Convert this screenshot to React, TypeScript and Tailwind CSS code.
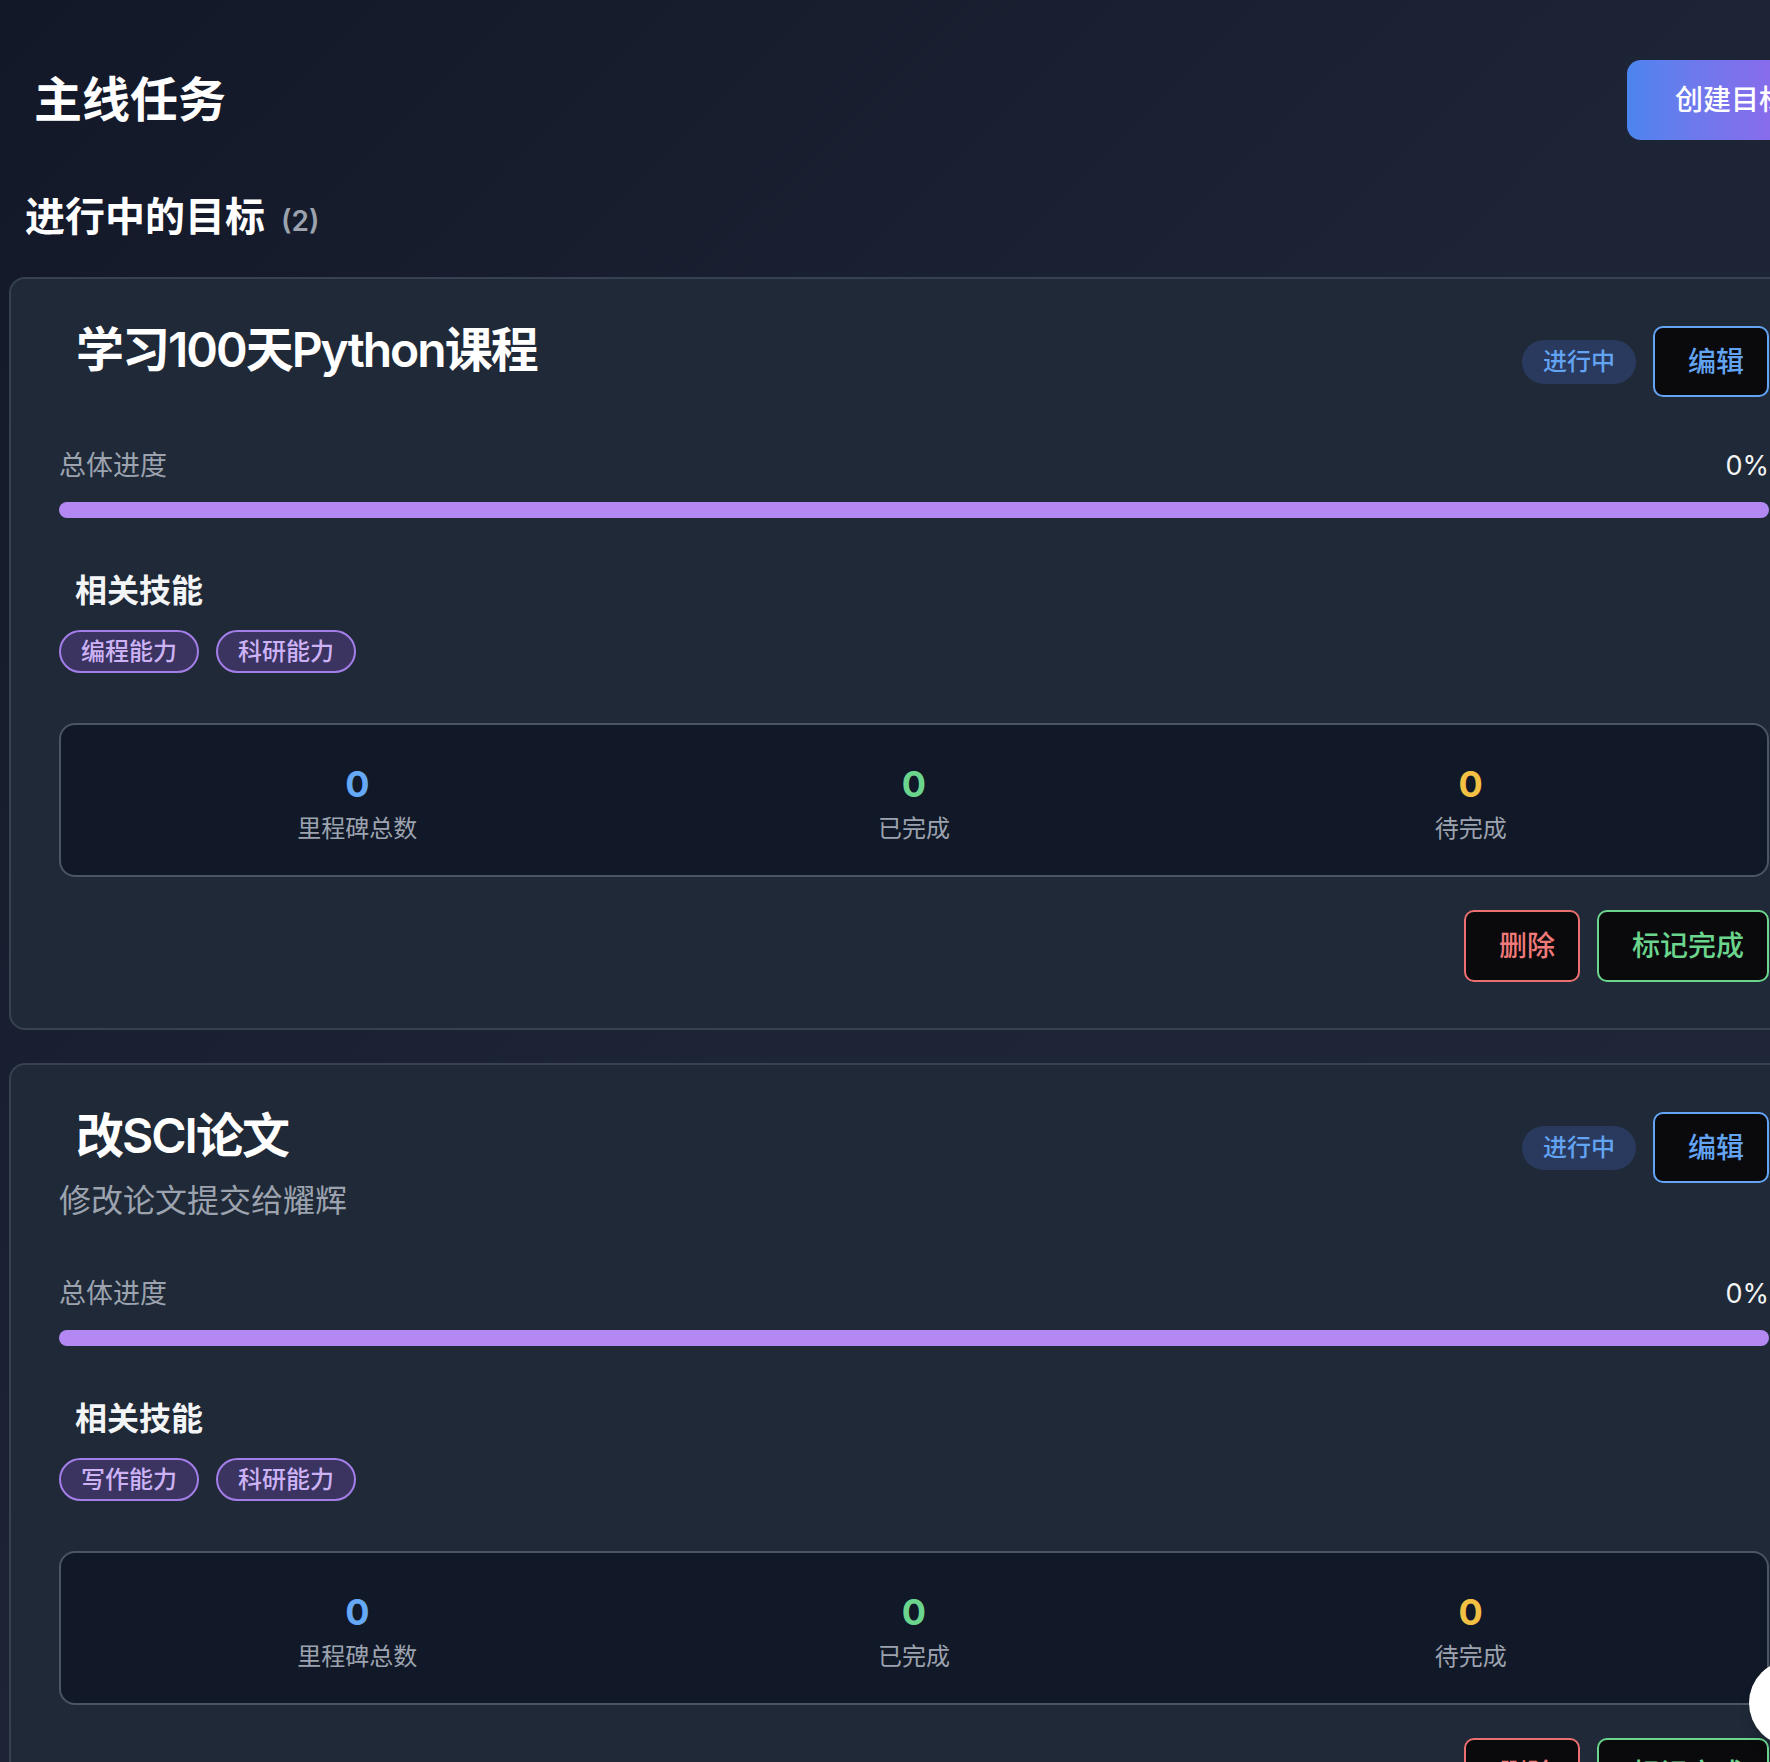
import React from "react";

type Goal = {
  title: string;
  desc?: string;
  skills: string[];
};

const goals: Goal[] = [
  { title: "学习100天Python课程", skills: ["编程能力", "科研能力"] },
  { title: "改SCI论文", desc: "修改论文提交给耀辉", skills: ["写作能力", "科研能力"] },
];

function Stat({ value, label, color }: { value: string; label: string; color: string }) {
  return (
    <div className="flex flex-col items-center">
      <div className={`text-[36px] leading-[40px] font-bold ${color}`}>{value}</div>
      <div className="mt-[9px] text-[24px] leading-[32px] text-[#9ca3af]">{label}</div>
    </div>
  );
}

function GoalCard({ goal }: { goal: Goal }) {
  return (
    <div className="w-[1810px] border-2 border-[#374151] rounded-[16px] bg-[#1f2937] px-[48px] pt-[47px] pb-[46px]">
      <div className="flex justify-between items-start">
        <div className="pl-[17px]">
          <h3 className="text-[48px] leading-[48px] font-semibold tracking-[-2px] text-white">{goal.title}</h3>
          {goal.desc && (
            <p className="-ml-[17px] mt-[17px] text-[32px] leading-[48px] text-[#9ca3af]">{goal.desc}</p>
          )}
        </div>
        <div className="flex items-center gap-[17px]">
          <span className="h-[44px] px-[21px] rounded-full bg-[#2a3a5e] text-[#63a4f2] text-[24px] leading-[44px] font-medium">
            进行中
          </span>
          <button className="h-[71px] pl-[33px] pr-[23px] border-2 border-[#63a4f5] rounded-[10px] bg-[#0a0a0c] text-[#63a4f2] text-[28px] font-medium">
            编辑
          </button>
        </div>
      </div>

      <div className="mt-[49px] flex justify-between items-center h-[40px]">
        <span className="text-[27px] text-[#9ca3af]">总体进度</span>
        <span className="text-[27px] text-[#f3f4f6]">0%</span>
      </div>
      <div className="mt-[16px] h-[16px] rounded-full bg-[#b388f3] overflow-hidden">
        <div className="h-full bg-[#9f6ef0]" style={{ width: "0%" }} />
      </div>

      <h4 className="mt-[51px] pl-[16px] text-[32px] leading-[44px] font-semibold text-[#f3f4f6]">相关技能</h4>
      <div className="mt-[17px] flex gap-[17px]">
        {goal.skills.map((s) => (
          <span
            key={s}
            className="h-[43px] px-[20px] border-2 border-[#a47ee8] rounded-full bg-[#3b3461] text-[#cdb3f6] text-[24px] leading-[39px] font-medium"
          >
            {s}
          </span>
        ))}
      </div>

      <div className="mt-[50px] h-[154px] border-2 border-[#4b5563] rounded-[16px] bg-[#111827] px-[18px] pt-[39px] grid grid-cols-3">
        <Stat value="0" label="里程碑总数" color="text-[#64a8f6]" />
        <Stat value="0" label="已完成" color="text-[#6bd58d]" />
        <Stat value="0" label="待完成" color="text-[#f2c144]" />
      </div>

      <div className="mt-[33px] flex justify-end gap-[17px]">
        <button className="h-[72px] pl-[33px] pr-[23px] border-2 border-[#ec7070] rounded-[10px] bg-[#0a0a0c] text-[#f07a7a] text-[28px] font-medium">
          删除
        </button>
        <button className="h-[72px] pl-[33px] pr-[23px] border-2 border-[#6bd58d] rounded-[10px] bg-[#0a0a0c] text-[#6bd58d] text-[28px] font-medium">
          标记完成
        </button>
      </div>
    </div>
  );
}

export default function App() {
  return (
    <div className="relative w-[1770px] h-[1762px] overflow-hidden bg-linear-to-br from-[#121828] via-[#1d2435] to-[#1f2738] font-['Inter','Noto_Sans_CJK_SC',sans-serif]">
      <div className="w-[1828px] px-[9px]">
        <div className="pt-[60px] flex items-center justify-between">
          <h1 className="pl-[25px] text-[48px] leading-[56px] font-bold text-white">主线任务</h1>
          <button className="-mr-[16px] h-[80px] w-[208px] pl-[48px] text-left rounded-[14px] bg-linear-to-r from-[#4b84ee] to-[#9a5ee9] text-white text-[28px] font-medium">
            创建目标
          </button>
        </div>

        <h2 className="mt-[52px] pl-[16px] flex items-baseline text-[40px] leading-[50px] font-bold text-white">
          进行中的目标
          <span className="ml-[16px] text-[28px] font-semibold text-[#9ca3af]">(2)</span>
        </h2>

        <div className="mt-[31px] flex flex-col gap-[33px]">
          {goals.map((g) => (
            <GoalCard key={g.title} goal={g} />
          ))}
        </div>
      </div>

      <div className="absolute left-[1749px] top-[1660px] w-[86px] h-[86px] rounded-full bg-white shadow-lg" />
    </div>
  );
}
